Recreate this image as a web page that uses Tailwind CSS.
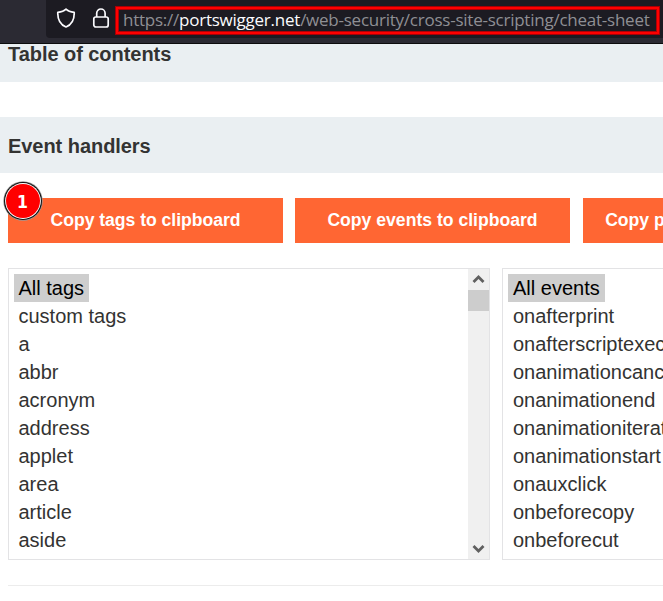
<!DOCTYPE html>
<html lang="en">
<head>
<meta charset="utf-8">
<title>Cross-site scripting cheat sheet</title>
<script src="https://cdn.jsdelivr.net/npm/@tailwindcss/browser@4"></script>
</head>
<body class="w-[663px] h-[601px] overflow-hidden bg-white font-['Liberation_Sans',Arial,sans-serif] text-[#333332]">
<header class="h-11 bg-[#2b2a33] border-b border-[#0c0c0d] pl-[46px]">
  <div class="h-[38px] bg-[#1c1b22] rounded-bl-[4px] flex pl-[10px] overflow-hidden">
    <svg class="shrink-0 mt-2 w-5 h-5" viewBox="0 0 20 20" fill="none" stroke="#fbfbfe" stroke-width="1.7" stroke-linejoin="round"><path d="M10 1.2 C8.4 2.9 4.8 4.1 1.8 4.3 C1.5 11 3.5 16.3 10 19 C16.500 16.3 18.500 11 18.200 4.300 C15.200 4.100 11.600 2.900 10 1.200Z"/></svg>
    <svg class="shrink-0 mt-2 ml-[15px] w-5 h-5" viewBox="0 0 20 20" fill="none" stroke="#fbfbfe" stroke-width="1.7"><rect x="2.800" y="9" width="14.400" height="10" rx="2"/><path d="M5.700 9V5.200a4.200 4.200 0 0 1 8.400 0V9"/></svg>
    <div class="shrink-0 ml-[4px] mt-[6px] w-[545px] h-[29px] border border-[#a50006]">
      <div class="h-full border-2 border-[#ff0000]">
        <div class="h-full border border-[#b00006] pl-1 flex items-center whitespace-nowrap font-['Open_Sans','Noto_Sans',sans-serif] text-[17px] leading-[21px] tracking-[-0.24px] text-[#8f8f94]"><span class="-mt-[3px]">https://<span class="text-[#fbfbfe]">portswigger.net</span>/web-security/cross-site-scripting/cheat-sheet</span></div>
      </div>
    </div>
  </div>
</header>
<main>
  <h2 class="h-[38px] bg-[#eaeff2] pl-2 text-xl leading-5 font-bold tracking-[-0.05px]">Table of contents</h2>
  <h2 class="mt-[35px] h-14 bg-[#eaeff2] pl-2 text-xl leading-[58px] font-bold tracking-[-0.05px]">Event handlers</h2>
  <div class="relative mt-[25px] ml-2 flex h-[45px] w-[850px] text-white font-bold text-[17.6px] leading-[43px] text-center">
    <button class="w-[275px] bg-[#ff6633] tracking-[-0.03px]">Copy tags to clipboard</button>
    <button class="ml-3 w-[275px] bg-[#ff6633]">Copy events to clipboard</button>
    <button class="ml-[13px] w-[275px] bg-[#ff6633] whitespace-nowrap">Copy payloads to clipboard</button>
    <svg class="absolute -left-[5px] -top-[17px] w-10 h-10" viewBox="0 0 40 40"><circle cx="20" cy="20" r="19.700" fill="#999"/><circle cx="20" cy="20" r="19" fill="#111"/><circle cx="20" cy="20" r="17.900" fill="#fff"/><circle cx="20" cy="20" r="17" fill="#f00"/><text x="19.500" y="26.500" text-anchor="middle" fill="#fff" font-family="DejaVu Sans Condensed, DejaVu Sans" font-weight="bold" font-size="17.500">1</text></svg>
  </div>
  <div class="mt-[25px] ml-2 flex gap-3 w-[980px] text-xl leading-7">
    <div class="w-[482px] h-[292px] border border-[#e3e3e5] flex justify-between">
      <ul class="pl-[5px] pt-[5px]">
        <li class="w-fit bg-[#cecece] text-black pl-[4.500px] pr-[5px]">All tags</li>
        <li class="pl-[4.500px]">custom tags</li>
        <li class="pl-[4.500px]">a</li>
        <li class="pl-[4.500px]">abbr</li>
        <li class="pl-[4.500px]">acronym</li>
        <li class="pl-[4.500px]">address</li>
        <li class="pl-[4.500px]">applet</li>
        <li class="pl-[4.500px]">area</li>
        <li class="pl-[4.500px]">article</li>
        <li class="pl-[4.500px]">aside</li>
      </ul>
      <div class="w-[21px] bg-[#f0f0f0] flex flex-col">
        <svg class="w-[21px] h-[21px]" viewBox="0 0 21 21" fill="none" stroke="#606060" stroke-width="2.800"><path d="M5.500 13 10.500 8l5 5"/></svg>
        <div class="h-[21px] bg-[#cdcdcd]"></div>
        <svg class="mt-auto w-[21px] h-[21px]" viewBox="0 0 21 21" fill="none" stroke="#606060" stroke-width="2.800"><path d="M5.500 8l5 5 5-5"/></svg>
      </div>
    </div>
    <div class="w-[482px] h-[292px] border border-[#e3e3e5]">
      <ul class="pl-[5px] pt-[5px]">
        <li class="w-fit bg-[#cecece] text-black pl-[5px] pr-[5px]">All events</li>
        <li class="pl-[5px]">onafterprint</li>
        <li class="pl-[5px]">onafterscriptexecute</li>
        <li class="pl-[5px]">onanimationcancel</li>
        <li class="pl-[5px]">onanimationend</li>
        <li class="pl-[5px]">onanimationiteration</li>
        <li class="pl-[5px]">onanimationstart</li>
        <li class="pl-[5px]">onauxclick</li>
        <li class="pl-[5px]">onbeforecopy</li>
        <li class="pl-[5px]">onbeforecut</li>
      </ul>
    </div>
  </div>
  <hr class="mt-[25px] ml-2 border-t border-[#ececec]">
</main>
</body>
</html>
